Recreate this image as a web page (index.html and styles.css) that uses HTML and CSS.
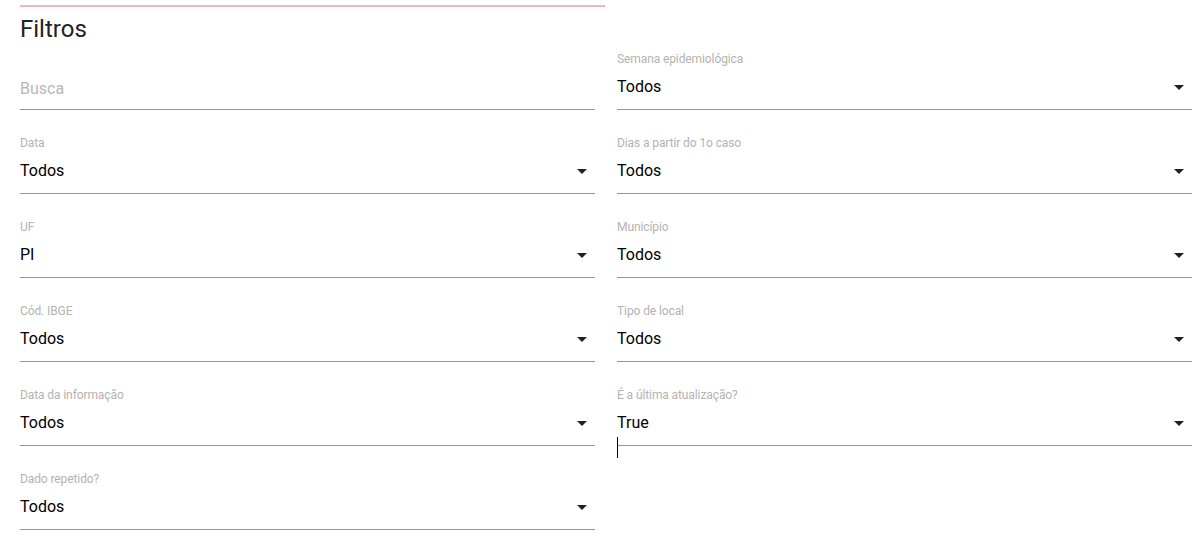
FILE: index.html
```html
<!DOCTYPE html>
<html lang="pt-BR">
<head>
<meta charset="utf-8">
<title>Filtros</title>
<link rel="stylesheet" href="styles.css">
</head>
<body>
<div class="page">
  <div class="header"><h1 class="title">Filtros</h1></div>
  <div class="grid">
    <div class="field">
      <div class="label">&nbsp;</div>
      <div class="control control--search"><span class="placeholder">Busca</span></div>
    </div>
    <div class="field">
      <div class="label">Semana epidemiológica</div>
      <div class="control"><span class="value">Todos</span><svg class="arrow" viewBox="0 0 24 24" width="24" height="24"><path d="M7 10l5 5 5-5z"/></svg></div>
    </div>
    <div class="field">
      <div class="label">Data</div>
      <div class="control"><span class="value">Todos</span><svg class="arrow" viewBox="0 0 24 24" width="24" height="24"><path d="M7 10l5 5 5-5z"/></svg></div>
    </div>
    <div class="field">
      <div class="label">Dias a partir do 1o caso</div>
      <div class="control"><span class="value">Todos</span><svg class="arrow" viewBox="0 0 24 24" width="24" height="24"><path d="M7 10l5 5 5-5z"/></svg></div>
    </div>
    <div class="field">
      <div class="label">UF</div>
      <div class="control"><span class="value">PI</span><svg class="arrow" viewBox="0 0 24 24" width="24" height="24"><path d="M7 10l5 5 5-5z"/></svg></div>
    </div>
    <div class="field">
      <div class="label">Município</div>
      <div class="control"><span class="value">Todos</span><svg class="arrow" viewBox="0 0 24 24" width="24" height="24"><path d="M7 10l5 5 5-5z"/></svg></div>
    </div>
    <div class="field">
      <div class="label">Cód. IBGE</div>
      <div class="control"><span class="value">Todos</span><svg class="arrow" viewBox="0 0 24 24" width="24" height="24"><path d="M7 10l5 5 5-5z"/></svg></div>
    </div>
    <div class="field">
      <div class="label">Tipo de local</div>
      <div class="control"><span class="value">Todos</span><svg class="arrow" viewBox="0 0 24 24" width="24" height="24"><path d="M7 10l5 5 5-5z"/></svg></div>
    </div>
    <div class="field">
      <div class="label">Data da informação</div>
      <div class="control"><span class="value">Todos</span><svg class="arrow" viewBox="0 0 24 24" width="24" height="24"><path d="M7 10l5 5 5-5z"/></svg></div>
    </div>
    <div class="field">
      <div class="label">É a última atualização?</div>
      <div class="control"><span class="value">True</span><svg class="arrow" viewBox="0 0 24 24" width="24" height="24"><path d="M7 10l5 5 5-5z"/></svg></div>
      <span class="caret"></span>
    </div>
    <div class="field">
      <div class="label">Dado repetido?</div>
      <div class="control"><span class="value">Todos</span><svg class="arrow" viewBox="0 0 24 24" width="24" height="24"><path d="M7 10l5 5 5-5z"/></svg></div>
    </div>
  </div>
</div>
</body>
</html>
```
FILE: styles.css
```css
html, body {
  margin: 0;
  padding: 0;
  background: #ffffff;
}
body {
  font-family: Roboto, "Liberation Sans", Arial, sans-serif;
  color: #000;
}
.page {
  padding: 0 7px 0 20px;
}
.header {
  width: 585px;
  margin-top: 5px;
  border-top: 2px solid #f8b2b7;
}
.title {
  margin: 8px 0 0 0;
  font-size: 24px;
  line-height: 28px;
  font-weight: 400;
  color: #222222;
}
.grid {
  margin-top: 9px;
  display: grid;
  grid-template-columns: 1fr 1fr;
  column-gap: 22px;
  row-gap: 26px;
}
.field {
  position: relative;
  display: flex;
  flex-direction: column;
}
.label {
  font-size: 12px;
  line-height: 14px;
  height: 14px;
  color: #b3b3b3;
  margin-bottom: 11px;
  white-space: nowrap;
  letter-spacing: -0.1px;
}
.control {
  display: flex;
  align-items: center;
  justify-content: space-between;
  height: 19px;
  padding-bottom: 13px;
  border-bottom: 1px solid #949494;
}
.control--search {
  padding-top: 2px;
  padding-bottom: 11px;
}
.value {
  font-size: 16px;
  line-height: 19px;
  color: #000;
}
.placeholder {
  font-size: 16px;
  line-height: 19px;
  color: #b8b8b8;
}
.arrow {
  flex: none;
  fill: #222222;
  margin-right: 1px;
}
.caret {
  position: absolute;
  left: 0;
  top: 49px;
  width: 1px;
  height: 21px;
  background: #000;
}
```
